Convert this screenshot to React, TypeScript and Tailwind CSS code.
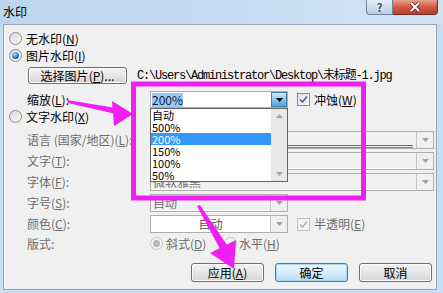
import React from "react";

const cjk = "font-['Noto_Sans_CJK_SC','Microsoft_YaHei',sans-serif]";

// accelerator key, underlined like the win32 dialog
const Acc = ({ k }: { k: string }) => (
  <>
    (<span className="underline underline-offset-1">{k}</span>)
  </>
);

const Radio = ({ checked, disabled }: { checked?: boolean; disabled?: boolean }) => (
  <span
    className={`flex h-[13px] w-[13px] shrink-0 items-center justify-center rounded-full border ${
      disabled ? "border-[#c2c2c2] bg-[#f4f4f4]" : "border-[#8b8b8b] bg-gradient-to-br from-[#d8d8d8] to-[#fcfcfc]"
    }`}
  >
    {checked && (
      <span
        className={`h-[7px] w-[7px] rounded-full ${
          disabled ? "bg-[#b9b9b9]" : "bg-[radial-gradient(circle_at_35%_30%,#a6dcff,#1b5fb3_70%)]"
        }`}
      />
    )}
  </span>
);

const Check = ({ disabled }: { disabled?: boolean }) => (
  <span
    className={`flex h-[13px] w-[13px] shrink-0 items-center justify-center border ${
      disabled ? "border-[#c2c2c2] bg-[#f4f4f4]" : "border-[#8b8b8b] bg-gradient-to-br from-[#dedede] to-[#fafafa]"
    }`}
  >
    <svg width="9" height="9" viewBox="0 0 9 9">
      <path
        d="M1 4.5 L3.5 7 L8 1.5"
        fill="none"
        stroke={disabled ? "#b0b0b0" : "#4c61a0"}
        strokeWidth="1.6"
      />
    </svg>
  </span>
);

const Arrow = ({ color = "#a3a3a3" }: { color?: string }) => (
  <svg width="7" height="4" viewBox="0 0 7 4">
    <path d="M0 0 H7 L3.5 4 Z" fill={color} />
  </svg>
);

const GrayCombo = ({
  wide,
  children,
  lines,
}: {
  wide?: boolean;
  children?: React.ReactNode;
  lines?: boolean;
}) => (
  <div
    className={`flex h-[18px] border border-[#adadad] bg-[#f0f0f0] ${wide ? "w-[284px]" : "w-[138px]"}`}
  >
    <div className="relative flex flex-1 items-center border border-[#f0f0f0] border-b-white pl-[1px] text-[#6d6d6d]">
      {children}
      {lines && (
        <div className="absolute left-[1px] right-[2px] top-[12px] flex flex-col gap-[1px]">
          <div className="h-px bg-[#6c6c6c]" />
          <div className="h-px bg-[#8a8a8a]" />
        </div>
      )}
    </div>
    <div className="flex w-[17px] items-center justify-center border-l border-[#c4c4c4] bg-[#f0f0f0]">
      <Arrow />
    </div>
  </div>
);

const Label = ({ children, off }: { children: React.ReactNode; off?: boolean }) => (
  <span className={`w-[123px] shrink-0 whitespace-nowrap ${off ? "text-[#6d6d6d]" : "text-black"}`}>
    {children}
  </span>
);

const Btn = ({ children, def, wide }: { children: React.ReactNode; def?: boolean; wide?: boolean }) => (
  <button
    className={`flex shrink-0 items-center justify-center whitespace-nowrap rounded-[3px] border bg-gradient-to-b ${
      wide ? "h-[17px] w-[99px]" : "h-[19px] w-[73px]"
    } ${
      def
        ? "border-[#3c7fb1] from-[#f1f8fd] via-[#d9ecf9] to-[#b9dcf4] shadow-[inset_0_0_0_1px_#a6d6f5]"
        : "border-[#707070] from-[#f4f4f4] via-[#e6e6e6] to-[#d4d4d4] shadow-[inset_0_0_0_1px_#fcfcfc]"
    }`}
  >
    {children}
  </button>
);

const scaleItems = ["自动", "500%", "200%", "150%", "100%", "50%"];

export default function App() {
  return (
    <div
      className={`relative h-[293px] w-[443px] overflow-hidden bg-[#c8ddf3] text-[12px] leading-[14px] ${cjk}`}
    >
      {/* title bar */}
      <div className="flex h-[24px] items-start justify-between bg-gradient-to-r from-[#bcd4ed] to-[#d2e4f6] pl-[3px] pr-[5px]">
        <span className="mt-[5px] text-[12px] text-black">水印</span>
        <div className="flex">
          <div className="flex h-[15px] w-[27px] items-center justify-center rounded-bl-[4px] border border-t-0 border-[#6d819c] bg-gradient-to-b from-[#e6eef8] to-[#bccde2] text-[11px] font-bold leading-none text-[#3b4d63]">
            ?
          </div>
          <div className="flex h-[15px] w-[45px] items-center justify-center rounded-br-[4px] border border-l-0 border-t-0 border-[#7a2b22] bg-gradient-to-b from-[#e6a090] via-[#cf5a46] to-[#c0392b]">
            <svg width="12" height="10" viewBox="0 0 12 10">
              <path d="M2 1 L10 9 M10 1 L2 9" stroke="#5a1a12" strokeWidth="3.4" />
              <path d="M2 1 L10 9 M10 1 L2 9" stroke="#ffffff" strokeWidth="2" />
            </svg>
          </div>
        </div>
      </div>

      {/* body */}
      <div className="ml-[3px] flex h-[266px] w-[434px] flex-col border border-[#97a3b1] bg-[#f0f0f0] pt-[5px]">
        <div className="flex h-[17px] items-center gap-[4px] pl-[5px]">
          <Radio />
          <span>
            无水印<Acc k="N" />
          </span>
        </div>
        <div className="flex h-[17px] items-center gap-[4px] pl-[5px]">
          <Radio checked />
          <span>
            图片水印<Acc k="I" />
          </span>
        </div>
        <div className="mt-[3px] flex h-[17px] items-center pl-[24px]">
          <Btn wide>
            选择图片<Acc k="P" />...
          </Btn>
          <span className="ml-[10px] whitespace-nowrap font-['Liberation_Mono','Noto_Sans_CJK_SC',monospace] tracking-[-1.2px]">
            C:\Users\Administrator\Desktop\未标题-1.jpg
          </span>
        </div>

        <div className="mt-[7px] flex h-[17px] items-center pl-[23px]">
          <Label>
            缩放<Acc k="L" />:
          </Label>
          <div className="relative flex h-[17px] w-[138px] border border-[#abadb3] bg-white">
            <div className="flex flex-1 items-center pl-[1px]">
              <span className="bg-[#99c8f4] text-[#0b1c35]">200%</span>
            </div>
            <div className="flex w-[16px] items-center justify-center border border-[#3c7fb1] bg-gradient-to-b from-[#d6ecfb] via-[#86c2ec] to-[#5aa4dc]">
              <Arrow color="#000" />
            </div>
            {/* open drop list */}
            <div className="absolute left-[-1px] top-[16px] z-10 flex h-[74px] w-[138px] border border-[#646464] bg-white">
              <div className="flex flex-1 flex-col">
                {scaleItems.map((it) => (
                  <div
                    key={it}
                    className={`flex h-[12px] items-center pl-[1px] text-[11px] leading-[12px] ${
                      it === "200%" ? "bg-[#3399ff] text-white" : "text-black"
                    }`}
                  >
                    {it}
                  </div>
                ))}
              </div>
              <div className="flex w-[16px] flex-col items-center justify-between bg-[#e9e9e9] py-[5px]">
                <svg width="7" height="4" viewBox="0 0 7 4">
                  <path d="M0 4 H7 L3.5 0 Z" fill="#a3a3a3" />
                </svg>
                <Arrow />
              </div>
            </div>
          </div>
          <span className="ml-[9px]">
            <Check />
          </span>
          <span className="ml-[4px]">
            冲蚀<Acc k="W" />
          </span>
        </div>

        <div className="flex h-[17px] items-center gap-[4px] pl-[5px]">
          <Radio />
          <span>
            文字水印<Acc k="X" />
          </span>
        </div>

        <div className="mt-[6px] flex h-[18px] items-center pl-[23px]">
          <Label off>
            语言 (国家/地区)<Acc k="L" />:
          </Label>
          <GrayCombo wide lines />
        </div>
        <div className="mt-[3px] flex h-[18px] items-center pl-[23px]">
          <Label off>
            文字<Acc k="T" />:
          </Label>
          <GrayCombo wide />
        </div>
        <div className="mt-[3px] flex h-[18px] items-center pl-[23px]">
          <Label off>
            字体<Acc k="F" />:
          </Label>
          <GrayCombo wide>微软雅黑</GrayCombo>
        </div>
        <div className="mt-[3px] flex h-[18px] items-center pl-[23px]">
          <Label off>
            字号<Acc k="S" />:
          </Label>
          <GrayCombo>自动</GrayCombo>
        </div>
        <div className="mt-[3px] flex h-[18px] items-center pl-[23px]">
          <Label off>
            颜色<Acc k="C" />:
          </Label>
          <div className="flex h-[18px] w-[138px] border border-[#adadad] bg-white">
            <div className="flex flex-1 items-center justify-center text-[#505050]">自动</div>
            <div className="flex w-[17px] items-center justify-center border-l border-[#c4c4c4] bg-[#f0f0f0]">
              <Arrow />
            </div>
          </div>
          <span className="ml-[9px]">
            <Check disabled />
          </span>
          <span className="ml-[4px] text-[#6d6d6d]">
            半透明<Acc k="E" />
          </span>
        </div>
        <div className="mt-[2px] flex h-[17px] items-center pl-[23px] text-[#6d6d6d]">
          <Label off>版式:</Label>
          <div className="flex w-[74px] items-center gap-[3px]">
            <Radio checked disabled />
            <span>
              斜式<Acc k="D" />
            </span>
          </div>
          <div className="flex items-center gap-[2px]">
            <Radio disabled />
            <span>
              水平<Acc k="H" />
            </span>
          </div>
        </div>

        <div className="mt-[11px] flex h-[19px] justify-end gap-[11px] pr-[4px]">
          <Btn>
            应用<Acc k="A" />
          </Btn>
          <Btn def>确定</Btn>
          <Btn>取消</Btn>
        </div>
      </div>

      {/* magenta annotation */}
      <svg className="pointer-events-none absolute inset-0 z-20" width="443" height="293" viewBox="0 0 443 293">
        <rect x="133.5" y="84" width="230" height="114" fill="none" stroke="#f01ef0" strokeWidth="5" />
        <polygon points="67,100 68,103 116,114 116,108" fill="#f01ef0" />
        <polygon points="112,101 133,114 114,126" fill="#f01ef0" />
        <polygon points="197,206 200,205 227,245 220,249" fill="#f01ef0" />
        <polygon points="210,253 236,240 234,269" fill="#f01ef0" />
      </svg>
    </div>
  );
}
